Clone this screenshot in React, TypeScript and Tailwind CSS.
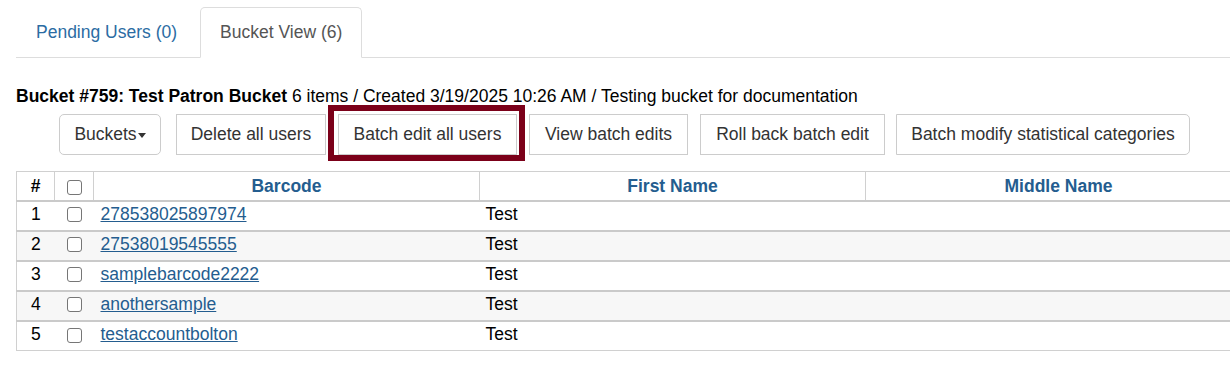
import React from 'react';

const rows = [
  { n: 1, barcode: '278538025897974', first: 'Test' },
  { n: 2, barcode: '27538019545555', first: 'Test' },
  { n: 3, barcode: 'samplebarcode2222', first: 'Test' },
  { n: 4, barcode: 'anothersample', first: 'Test' },
  { n: 5, barcode: 'testaccountbolton', first: 'Test' },
];

const Box = () => (
  <span className="inline-block w-[15px] h-[15px] rounded-[3px] border border-[#767676] bg-white align-middle" />
);

const btn = 'flex items-center justify-center py-[7px] border border-[#ccc] bg-white text-[#333] whitespace-nowrap';

const App = () => {
  return (
    <div className="w-[1230px] h-[380px] overflow-hidden bg-white text-black font-['Liberation_Sans',Arial,sans-serif] text-[17.5px] leading-[25px]">
      <div className="pl-4 pt-[7px]">
        <ul className="flex border-b border-[#ddd]">
          <li className="mr-[3px] -mb-px">
            <a className="block px-[19px] py-[12px] border border-transparent text-[#2b6ca3]">Pending Users (0)</a>
          </li>
          <li className="-mb-px">
            <a className="block px-[19px] py-[12px] border border-[#ddd] border-b-white rounded-t-[5px] bg-white text-[#555]">Bucket View (6)</a>
          </li>
        </ul>

        <div className="mt-[26px]">
          <b>Bucket #759: Test Patron Bucket</b> 6 items / Created 3/19/2025 10:26 AM / Testing bucket for documentation
        </div>

        <div className="flex items-center mt-[5px] ml-[43px]">
          <button className={`${btn} w-[102px] rounded-[5px]`}>
            Buckets
            <span className="ml-[1px] mt-[2px] w-0 h-0 border-l-[4px] border-r-[4px] border-t-[5px] border-l-transparent border-r-transparent border-t-[#333]" />
          </button>
          <button className={`${btn} w-[150px] ml-[15px]`}>Delete all users</button>
          <div className="relative ml-3">
            <button className={`${btn} w-[179px]`}>Batch edit all users</button>
            <span className="absolute top-[-9px] left-[-10px] right-[-8px] bottom-[-6px] border-[6px] border-[#7b0019] pointer-events-none" />
          </div>
          <button className={`${btn} w-[159px] ml-3`}>View batch edits</button>
          <button className={`${btn} w-[185px] ml-3`}>Roll back batch edit</button>
          <button className={`${btn} w-[294px] ml-[11px] rounded-r-[5px]`}>Batch modify statistical categories</button>
        </div>

        <table className="mt-4 table-fixed border-collapse w-[1235px] border border-[#d0d0d0]">
          <colgroup>
            <col className="w-[38px]" />
            <col className="w-[39px]" />
            <col className="w-[386px]" />
            <col className="w-[386px]" />
            <col className="w-[386px]" />
          </colgroup>
          <thead>
            <tr className="h-[29px] border-b-2 border-[#cacaca]">
              <th className="p-0 pt-[2px] border-r border-[#d0d0d0] font-bold text-center">#</th>
              <th className="p-0 pt-[2px] border-r border-[#d0d0d0] text-center"><Box /></th>
              <th className="p-0 pt-[2px] border-r border-[#d0d0d0] text-center text-[#245d8f]">Barcode</th>
              <th className="p-0 pt-[2px] border-r border-[#d0d0d0] text-center text-[#245d8f]">First Name</th>
              <th className="p-0 pt-[2px] text-center text-[#245d8f]">Middle Name</th>
            </tr>
          </thead>
          <tbody>
            {rows.map((r) => (
              <tr key={r.n} className={`h-[30px] border-t-2 border-[#cacaca] ${r.n % 2 === 0 ? 'bg-[#f7f7f7]' : 'bg-white'}`}>
                <td className="p-0 pb-[3px] text-center">{r.n}</td>
                <td className="p-0 pb-[3px] text-center"><Box /></td>
                <td className="px-[7px] py-0 pb-[3px]">
                  <a className="underline text-[#245d8f]">{r.barcode}</a>
                </td>
                <td className="px-[6px] py-0 pb-[3px]">{r.first}</td>
                <td className="px-[7px] py-0" />
              </tr>
            ))}
          </tbody>
        </table>
      </div>
    </div>
  );
};

export default App;
